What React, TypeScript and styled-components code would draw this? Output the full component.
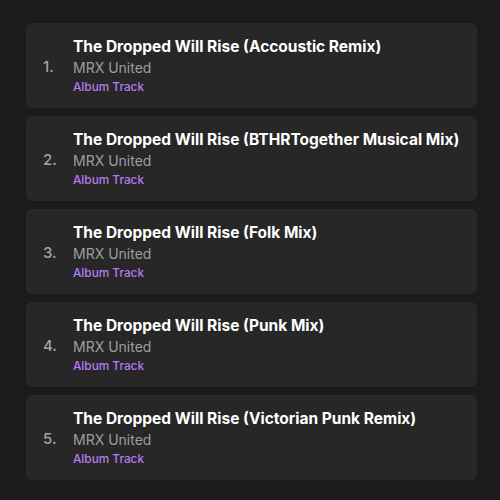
import styled, { createGlobalStyle } from "styled-components";

const GlobalStyle = createGlobalStyle`
  html, body {
    margin: 0;
    padding: 0;
    background: #1b1b1b;
  }
  body {
    font-family: Inter, "Noto Sans", sans-serif;
  }
`;

const List = styled.ol`
  list-style: none;
  margin: 0;
  padding: 23px 23px 0 26px;
  display: flex;
  flex-direction: column;
  gap: 8px;
  width: 451px;
`;

const Track = styled.li`
  display: flex;
  align-items: center;
  height: 85px;
  box-sizing: border-box;
  padding: 0 12px 0 17px;
  background: #272727;
  border-radius: 6px;
`;

const Index = styled.span`
  width: 30px;
  flex-shrink: 0;
  color: #a3a3a3;
  font-size: 15px;
  font-weight: 500;
  margin-top: 1px;
`;

const Info = styled.div`
  display: flex;
  flex-direction: column;
  margin-top: 1px;
`;

const Title = styled.h3`
  margin: 0;
  color: #ffffff;
  font-size: 15.5px;
  font-weight: 700;
  line-height: 21px;
  white-space: nowrap;
`;

const Artist = styled.span`
  color: #9e9e9e;
  font-size: 14px;
  line-height: 21px;
`;

const Kind = styled.span`
  color: #b57bf0;
  font-size: 11.8px;
  font-weight: 500;
  line-height: 19px;
`;

const tracks = [
  "The Dropped Will Rise (Accoustic Remix)",
  "The Dropped Will Rise (BTHRTogether Musical Mix)",
  "The Dropped Will Rise (Folk Mix)",
  "The Dropped Will Rise (Punk Mix)",
  "The Dropped Will Rise (Victorian Punk Remix)",
];

const App: React.FC = () => (
  <>
    <GlobalStyle />
    <List>
      {tracks.map((title, i) => (
        <Track key={title}>
          <Index>{i + 1}.</Index>
          <Info>
            <Title>{title}</Title>
            <Artist>MRX United</Artist>
            <Kind>Album Track</Kind>
          </Info>
        </Track>
      ))}
    </List>
  </>
);

export default App;
